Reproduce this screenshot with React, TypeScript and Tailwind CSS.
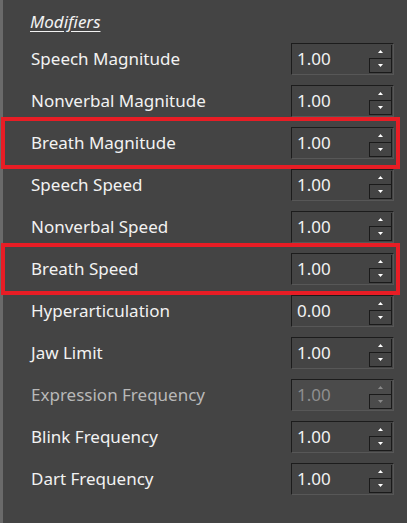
import React from "react";

const rows: { label: string; value: string; highlight?: boolean; disabled?: boolean }[] = [
  { label: "Speech Magnitude", value: "1.00" },
  { label: "Nonverbal Magnitude", value: "1.00" },
  { label: "Breath Magnitude", value: "1.00", highlight: true },
  { label: "Speech Speed", value: "1.00" },
  { label: "Nonverbal Speed", value: "1.00" },
  { label: "Breath Speed", value: "1.00", highlight: true },
  { label: "Hyperarticulation", value: "0.00" },
  { label: "Jaw Limit", value: "1.00" },
  { label: "Expression Frequency", value: "1.00", disabled: true },
  { label: "Blink Frequency", value: "1.00" },
  { label: "Dart Frequency", value: "1.00" },
];

function Arrow({ up, disabled }: { up?: boolean; disabled?: boolean }) {
  return (
    <svg width="5" height="3" viewBox="0 0 5 3" className="block">
      {up ? (
        <polygon points="2.5,0 5,3 0,3" fill={disabled ? "#8a8a8a" : "#ffffff"} />
      ) : (
        <polygon points="0,0 5,0 2.5,3" fill={disabled ? "#8a8a8a" : "#ffffff"} />
      )}
    </svg>
  );
}

function Spin({ value, disabled }: { value: string; disabled?: boolean }) {
  return (
    <div
      className={`flex h-[32px] w-[103px] border-t border-l border-t-[#1c1c1c] border-l-[#1c1c1c] border-b border-r border-b-[#575757] border-r-[#575757] ${
        disabled ? "bg-[#4b4b4b]" : "bg-[#444444]"
      }`}
    >
      <div
        className={`flex flex-1 items-center pl-[5px] text-[17px] ${
          disabled ? "text-[#8f8f8f]" : "text-[#f2f2f2]"
        }`}
      >
        {value}
      </div>
      <div className="flex w-[24px] flex-col pt-[1px] pr-[1px] pb-[1px]">
        <div className="flex flex-1 items-center justify-center border-r border-b border-r-[#1a1a1a] border-b-[#1a1a1a]">
          <Arrow up disabled={disabled} />
        </div>
        <div className="flex flex-1 items-center justify-center border-r border-b border-l border-r-[#1a1a1a] border-b-[#1a1a1a] border-l-[#1a1a1a]">
          <Arrow disabled={disabled} />
        </div>
      </div>
    </div>
  );
}

export default function App() {
  return (
    <div
      className="flex h-[523px] w-[407px] bg-[#444444]"
      style={{ fontFamily: '"Noto Sans", "Open Sans", sans-serif' }}
    >
      <div className="w-[3px] shrink-0 bg-[#6a6a6a]" />
      <div className="flex flex-1 flex-col">
        <div className="flex h-[38px] items-center pt-[5px] pl-[27px]">
          <span className="text-[17px] italic text-[#f2f2f2] underline underline-offset-[3px]">Modifiers</span>
        </div>
        {rows.map((r) => (
          <div key={r.label} className="relative flex h-[42px] items-center pl-[28px] pr-[13px]">
            <span className={`flex-1 text-[17px] ${r.disabled ? "text-[#b8b8b8]" : "text-[#f2f2f2]"}`}>{r.label}</span>
            <Spin value={r.value} disabled={r.disabled} />
            {r.highlight && (
              <div className="pointer-events-none absolute top-[-5px] bottom-[-5px] left-[-2px] right-[7px] border-[4px] border-[#e81d25]" />
            )}
          </div>
        ))}
      </div>
    </div>
  );
}
